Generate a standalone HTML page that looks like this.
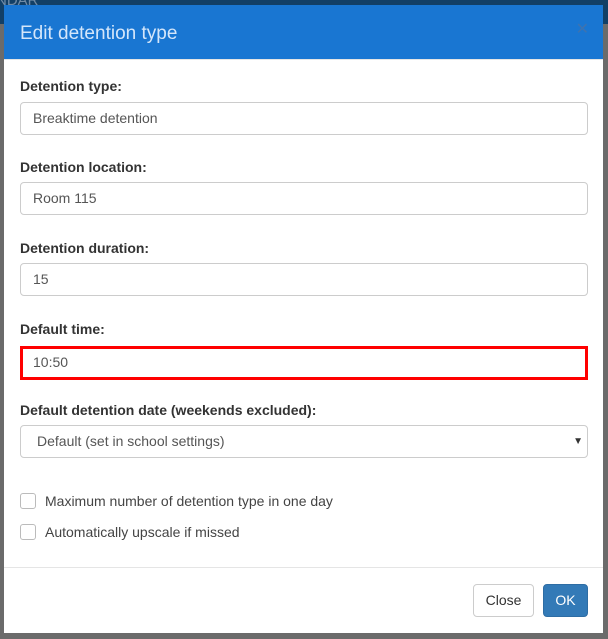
<!DOCTYPE html>
<html><head><style>
*{box-sizing:border-box;margin:0;padding:0}
body{width:608px;height:639px;overflow:hidden;background:#6b6b6b;font-family:"Liberation Sans",sans-serif;position:relative}
.topband{position:absolute;left:0;top:0;width:608px;height:24px;background:#123f66}
.topband span{position:absolute;left:-4px;top:-8px;color:#6f8aa6;font-size:15px}
.modal{position:absolute;left:4px;top:5px;width:599px;height:628px;background:#fff}
.hdr{height:55px;background:#1976d2;border-bottom:1px solid #e5e5e5;position:relative}
.hdr h4{position:absolute;left:16px;top:18px;color:#d4e6fa;font-size:19px;font-weight:normal}
.hdr .x{position:absolute;right:14px;top:14px;color:#3d73b0;font-size:16px}
label{position:absolute;left:16px;font-size:14px;font-weight:bold;color:#333}
.in{position:absolute;left:16px;width:568px;height:33px;border:1px solid #ccc;border-radius:4px;font-size:14px;color:#555;padding:7px 12px}
.red{border:3px solid #f00;border-radius:0;padding:5px 10px}
.cb{position:absolute;left:16px;width:16px;height:16px;border:1px solid #bbb;border-radius:3px}
.cl{position:absolute;left:41px;font-size:14px;color:#444}
.sep{position:absolute;left:0;top:562px;width:599px;height:1px;background:#e5e5e5}
.btn{position:absolute;top:579px;height:33px;border-radius:4px;font-size:14px;text-align:center;line-height:31px}
</style></head><body>
<div class="topband"><span>NDAR</span></div>
<div class="modal">
<div class="hdr"><h4>Edit detention type</h4><span class="x">✕</span></div>
<label style="top:73px">Detention type:</label>
<div class="in" style="top:97px">Breaktime detention</div>
<label style="top:154px">Detention location:</label>
<div class="in" style="top:177px">Room 115</div>
<label style="top:235px">Detention duration:</label>
<div class="in" style="top:258px">15</div>
<label style="top:316px">Default time:</label>
<div class="in red" style="top:341px;height:34px">10:50</div>
<label style="top:397px">Default detention date (weekends excluded):</label>
<div class="in" style="top:420px;padding-left:16px">Default (set in school settings)<span style="position:absolute;right:4px;top:10px;font-size:10px;color:#333">▼</span></div>
<div class="cb" style="top:488px"></div><div class="cl" style="top:488px">Maximum number of detention type in one day</div>
<div class="cb" style="top:519px"></div><div class="cl" style="top:519px">Automatically upscale if missed</div>
<div class="sep"></div>
<div class="btn" style="left:469px;width:61px;border:1px solid #ccc;color:#333">Close</div>
<div class="btn" style="left:539px;width:45px;background:#337ab7;border:1px solid #2e6da4;color:#fff">OK</div>
</div>
</body></html>
